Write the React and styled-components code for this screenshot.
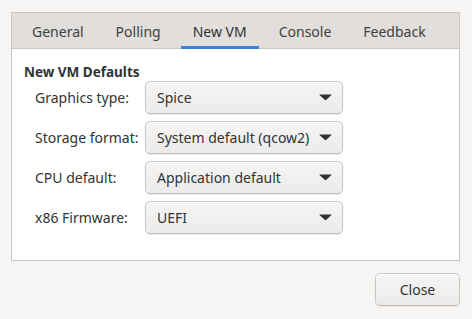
import React from "react";
import styled, { createGlobalStyle } from "styled-components";

const Global = createGlobalStyle`
  html, body { margin: 0; padding: 0; background: #f6f5f4; }
  body { font-family: "Noto Sans", "DejaVu Sans", sans-serif; color: #2e3436; font-size: 14px; }
`;

const Dialog = styled.div`
  width: 472px;
  height: 319px;
  box-sizing: border-box;
  padding: 12px 12px 0 11px;
  display: flex;
  flex-direction: column;
  background: #f6f5f4;
`;

const Notebook = styled.div`
  border: 1px solid #cdc7c2;
  background: #ffffff;
  display: flex;
  flex-direction: column;
`;

const TabBar = styled.div`
  height: 36px;
  box-sizing: border-box;
  background: #e1dedb;
  border-bottom: 1px solid #cdc7c2;
  display: flex;
  align-items: stretch;
  gap: 8px;
  padding-left: 8px;
`;

const Tab = styled.div`
  padding: 0 12px;
  display: flex;
  align-items: center;
  font-size: 14px;
  color: ${(p) => (p.$active ? "#2e3436" : "#3d4244")};
  box-shadow: ${(p) => (p.$active ? "inset 0 -3px 0 #3584e4" : "none")};
  margin-bottom: -1px;
  white-space: nowrap;
`;

const Content = styled.div`
  padding: 14px 12px 26px 12px;
  display: flex;
  flex-direction: column;
`;

const Heading = styled.div`
  font-weight: bold;
  font-size: 13.5px;
  line-height: 18px;
  height: 18px;
`;

const Grid = styled.div`
  display: grid;
  grid-template-columns: 102px 198px;
  grid-auto-rows: 33px;
  column-gap: 8px;
  row-gap: 7px;
  padding-left: 11px;
`;

const Label = styled.div`
  display: flex;
  align-items: center;
  font-size: 14px;
  white-space: nowrap;
`;

const Combo = styled.div`
  box-sizing: border-box;
  border: 1px solid #cdc7c2;
  border-bottom-color: #bfb8b1;
  border-radius: 5px;
  background: linear-gradient(#f6f5f4, #edebe9);
  box-shadow: inset 0 1px rgba(255, 255, 255, 0.8), 0 1px 2px rgba(0, 0, 0, 0.07);
  display: flex;
  align-items: center;
  justify-content: space-between;
  padding: 0 10px 0 11px;
  font-size: 14px;
  white-space: nowrap;
`;

const Arrow = () => (
  <svg width="13" height="7" viewBox="0 0 13 7">
    <path d="M0 0.5 H13 L6.5 6.5 Z" fill="#2e3436" />
  </svg>
);

const Footer = styled.div`
  display: flex;
  justify-content: flex-end;
  padding-top: 12px;
`;

const Button = styled.button`
  width: 85px;
  height: 33px;
  box-sizing: border-box;
  border: 1px solid #cdc7c2;
  border-bottom-color: #bfb8b1;
  border-radius: 5px;
  background: linear-gradient(#f6f5f4, #edebe9);
  box-shadow: inset 0 1px rgba(255, 255, 255, 0.8), 0 1px 2px rgba(0, 0, 0, 0.07);
  font-family: inherit;
  font-size: 14px;
  color: #2e3436;
  padding: 0;
`;

const tabs = ["General", "Polling", "New VM", "Console", "Feedback"];
const rows = [
  ["Graphics type:", "Spice"],
  ["Storage format:", "System default (qcow2)"],
  ["CPU default:", "Application default"],
  ["x86 Firmware:", "UEFI"],
];

export default function App() {
  return (
    <Dialog>
      <Global />
      <Notebook>
        <TabBar>
          {tabs.map((t) => (
            <Tab key={t} $active={t === "New VM"}>
              {t}
            </Tab>
          ))}
        </TabBar>
        <Content>
          <Heading>New VM Defaults</Heading>
          <Grid>
            {rows.map(([l, v]) => (
              <React.Fragment key={l}>
                <Label>{l}</Label>
                <Combo>
                  <span>{v}</span>
                  <Arrow />
                </Combo>
              </React.Fragment>
            ))}
          </Grid>
        </Content>
      </Notebook>
      <Footer>
        <Button>Close</Button>
      </Footer>
    </Dialog>
  );
}
